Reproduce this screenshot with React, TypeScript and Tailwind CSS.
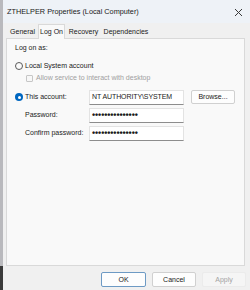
import React from "react";

const Radio = ({ checked }: { checked?: boolean }) =>
  checked ? (
    <span className="w-[8px] h-[8px] rounded-full bg-[#0067c0] flex items-center justify-center shrink-0">
      <span className="w-[3px] h-[3px] rounded-full bg-white" />
    </span>
  ) : (
    <span className="w-[8px] h-[8px] rounded-full border border-[#5a5a5a] bg-[#fbfbfb] shrink-0" />
  );

const TextBox = ({ value, dots }: { value: string; dots?: boolean }) => (
  <div
    className={
      "w-[95px] h-[15px] bg-white border border-[#e3e3e3] border-b-[#8d8d8d] flex items-center px-[2px] text-[#1a1a1a] whitespace-nowrap overflow-hidden " +
      (dots ? "text-[9px] font-bold tracking-[-0.1px]" : "text-[7px] tracking-[-0.1px]")
    }
  >
    {value}
  </div>
);

const Btn = ({ label, primary, disabled }: { label: string; primary?: boolean; disabled?: boolean }) => (
  <div
    className={
      "h-[15px] flex items-center justify-center text-[7px] rounded-[2px] border " +
      (primary
        ? "w-[45px] bg-[#fdfdfd] border-[#6d9ac4] text-[#1a1a1a]"
        : disabled
        ? "w-[44px] bg-[#f5f5f5] border-[#ebebeb] text-[#a3a3a3]"
        : "w-[44px] bg-[#fdfdfd] border-[#d0d0d0] text-[#1a1a1a]")
    }
  >
    {label}
  </div>
);

const App = () => {
  const pw = "•••••••••••••••";
  return (
    <div className="w-[250px] h-[290px] flex bg-[#2a2a2a] overflow-hidden font-['Liberation_Sans',_Arial,_sans-serif] leading-[12px] whitespace-nowrap">
      <div className="w-[3px] bg-[#b9b9bd] flex flex-col">
        <div className="flex-1" />
        <div className="h-[24px] bg-[#3a3a3a]" />
      </div>
      <div className="flex-1 flex flex-col bg-[#f0f0f0]">
        {/* title bar */}
        <div className="h-[23px] bg-[#eef2f7] flex items-center justify-between pl-[4px] pr-[6px] pt-[1px]">
          <span className="text-[7.3px] text-[#1a1a1a]">ZTHELPER Properties (Local Computer)</span>
          <svg width="9" height="9" viewBox="0 0 9 9" className="mr-[1px]">
            <path d="M1 1 L8 8 M8 1 L1 8" stroke="#3a3a3a" strokeWidth="1" />
          </svg>
        </div>
        {/* tabs */}
        <div className="flex items-end h-[15px] pl-[4px] text-[7px] text-[#1a1a1a]">
          <div className="w-[31px] h-[12px] flex items-center justify-center">General</div>
          <div className="w-[27px] h-[15px] flex items-center justify-center bg-[#f9f9f9] border border-b-0 border-[#d9d9d9] -mb-[1px] relative z-10">Log On</div>
          <div className="w-[37px] h-[12px] flex items-center justify-center">Recovery</div>
          <div className="w-[48px] h-[12px] flex items-center justify-center">Dependencies</div>
        </div>
        {/* panel */}
        <div className="ml-[3px] mr-[5px] h-[228px] bg-[#f9f9f9] border border-[#d9d9d9] pl-[8px] pt-[3px] text-[7px] text-[#1a1a1a]">
          <div className="h-[12px] flex items-center">Log on as:</div>
          <div className="mt-[6px] h-[12px] flex items-center gap-[2px]">
            <Radio />
            <span>Local System account</span>
          </div>
          <div className="h-[12px] flex items-center gap-[3px] pl-[11px] text-[#a0a0a0]">
            <span className="w-[7px] h-[7px] border border-[#c6c6c6] rounded-[1px] bg-[#f7f7f7]" />
            <span>Allow service to interact with desktop</span>
          </div>
          <div className="mt-[5px] h-[16px] flex items-center">
            <div className="w-[74px] flex items-center gap-[2px]">
              <Radio checked />
              <span>This account:</span>
            </div>
            <TextBox value="NT AUTHORITY\SYSTEM" />
            <div className="ml-[7px] w-[44px] h-[14px] bg-[#fdfdfd] border border-[#d0d0d0] rounded-[2px] flex items-center justify-center">
              Browse...
            </div>
          </div>
          <div className="mt-[2px] h-[16px] flex items-center">
            <span className="w-[74px] pl-[10px]">Password:</span>
            <TextBox value={pw} dots />
          </div>
          <div className="mt-[2px] h-[16px] flex items-center">
            <span className="w-[74px] pl-[10px]">Confirm password:</span>
            <TextBox value={pw} dots />
          </div>
        </div>
        {/* buttons */}
        <div className="flex justify-end gap-[6px] pr-[4px] mt-[6px]">
          <Btn label="OK" primary />
          <Btn label="Cancel" />
          <Btn label="Apply" disabled />
        </div>
      </div>
    </div>
  );
};

export default App;
